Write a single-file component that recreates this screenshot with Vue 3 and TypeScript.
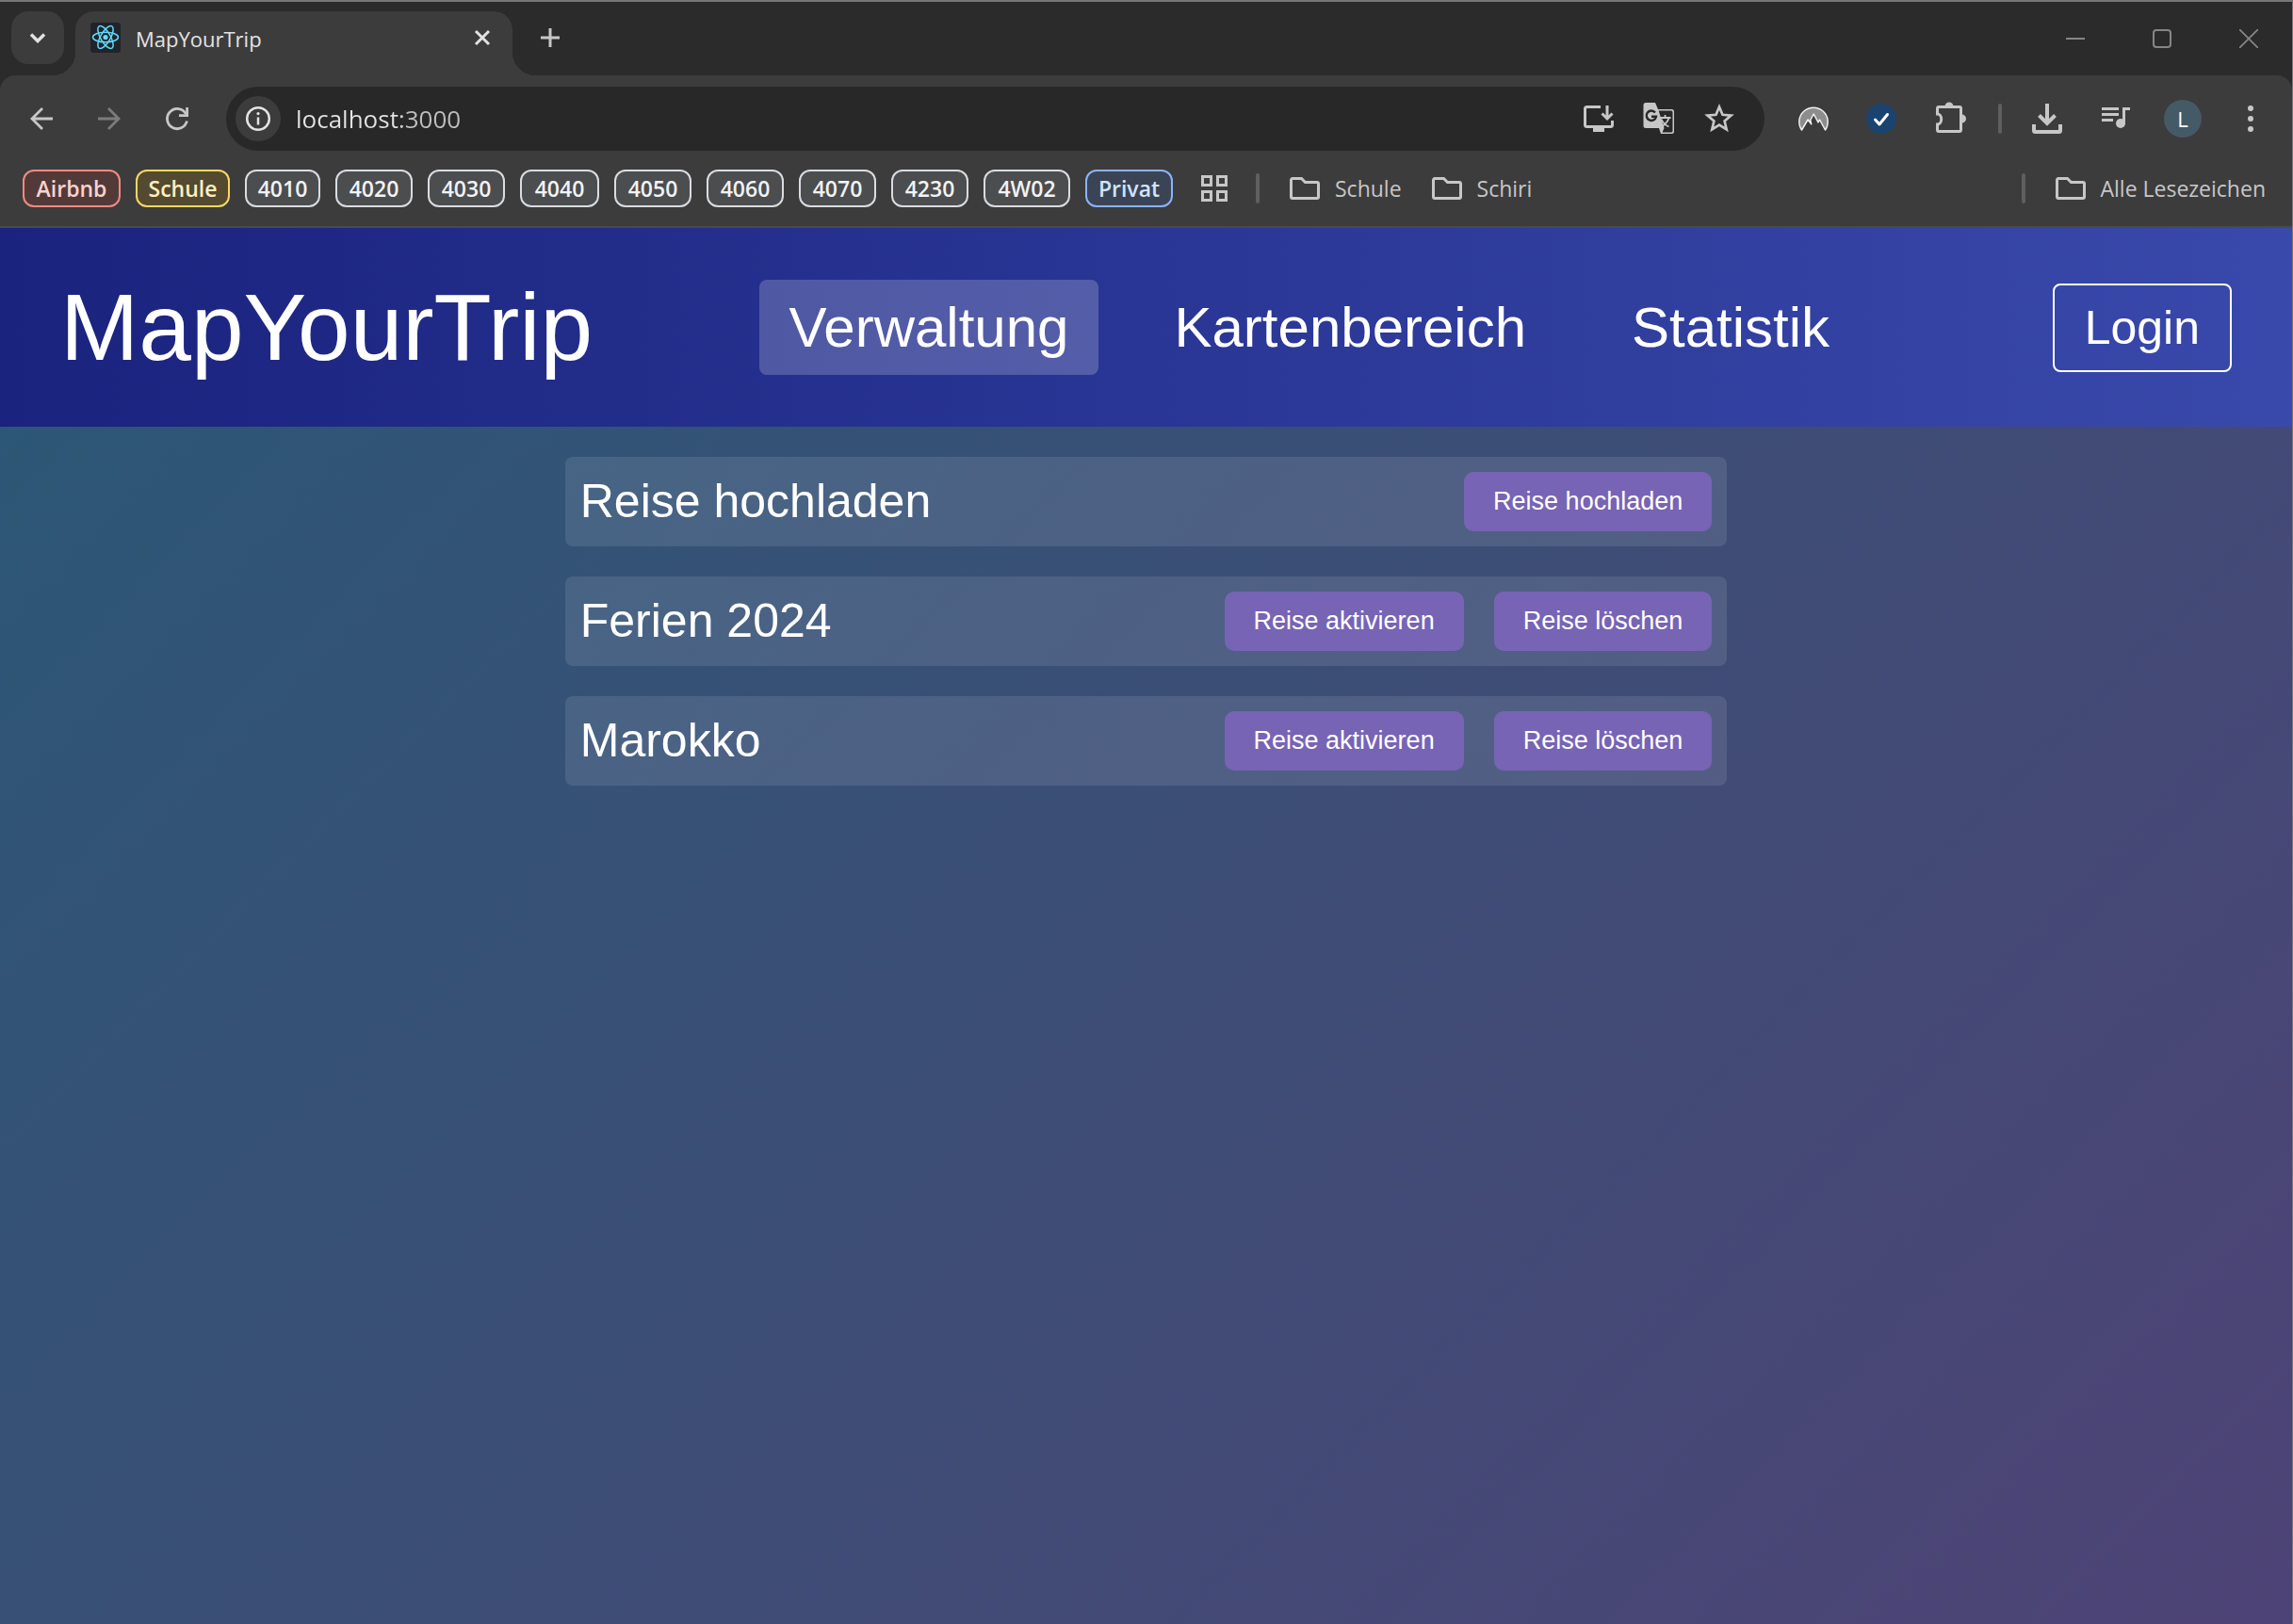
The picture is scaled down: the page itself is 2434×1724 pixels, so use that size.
<script setup lang="ts">
import { ref } from 'vue'

interface Chip {
  label: string
  tone: 'red' | 'yellow' | 'grey' | 'blue'
  width: number
}

interface TripAction {
  label: string
}

interface Trip {
  title: string
  actions: TripAction[]
}

const address = ref('localhost:3000')

const chips: Chip[] = [
  { label: 'Airbnb', tone: 'red', width: 104 },
  { label: 'Schule', tone: 'yellow', width: 100 },
  { label: '4010', tone: 'grey', width: 80 },
  { label: '4020', tone: 'grey', width: 82 },
  { label: '4030', tone: 'grey', width: 82 },
  { label: '4040', tone: 'grey', width: 84 },
  { label: '4050', tone: 'grey', width: 82 },
  { label: '4060', tone: 'grey', width: 82 },
  { label: '4070', tone: 'grey', width: 82 },
  { label: '4230', tone: 'grey', width: 82 },
  { label: '4W02', tone: 'grey', width: 92 },
  { label: 'Privat', tone: 'blue', width: 93 },
]

const folders: string[] = ['Schule', 'Schiri']

const pages: string[] = ['Verwaltung', 'Kartenbereich', 'Statistik']
const activePage = ref('Verwaltung')

const trips: Trip[] = [
  { title: 'Reise hochladen', actions: [{ label: 'Reise hochladen' }] },
  { title: 'Ferien 2024', actions: [{ label: 'Reise aktivieren' }, { label: 'Reise löschen' }] },
  { title: 'Marokko', actions: [{ label: 'Reise aktivieren' }, { label: 'Reise löschen' }] },
]
</script>

<template>
  <div class="window">
    <div class="tabstrip">
      <button class="tab-search" aria-label="Tabs durchsuchen">
        <svg width="24" height="24" viewBox="0 0 24 24" fill="none" stroke="#e3e3e3" stroke-width="3.4">
          <path d="M5 8.5l7 7 7-7" />
        </svg>
      </button>
      <div class="tab">
        <svg class="favicon" width="32" height="32" viewBox="0 0 32 32" fill="none">
          <rect width="32" height="32" rx="3" fill="#20232a" />
          <g stroke="#61dafb" stroke-width="1.5">
            <ellipse cx="16" cy="15.500" rx="13.500" ry="5.200" />
            <ellipse cx="16" cy="15.500" rx="13.500" ry="5.200" transform="rotate(60 16 15.500)" />
            <ellipse cx="16" cy="15.500" rx="13.500" ry="5.200" transform="rotate(120 16 15.500)" />
          </g>
          <circle cx="16" cy="15.500" r="2.600" fill="#61dafb" />
        </svg>
        <span class="tab-title">MapYourTrip</span>
        <button class="tab-close" aria-label="Tab schließen">
          <svg width="20" height="20" viewBox="0 0 20 20" stroke="#e3e3e3" stroke-width="3">
            <path d="M3 3l14 14M17 3L3 17" />
          </svg>
        </button>
      </div>
      <button class="tab-new" aria-label="Neuer Tab">
        <svg width="20" height="20" viewBox="0 0 20 20" stroke="#c7c7c7" stroke-width="3">
          <path d="M10 0v20M0 10h20" />
        </svg>
      </button>
      <div class="window-controls">
        <button aria-label="Minimieren">
          <svg width="20" height="20" viewBox="0 0 20 20" stroke="#868686" stroke-width="2"><path d="M0 10h20" /></svg>
        </button>
        <button aria-label="Maximieren">
          <svg width="20" height="20" viewBox="0 0 20 20" fill="none" stroke="#868686" stroke-width="2">
            <rect x="1" y="1" width="18" height="18" rx="3" />
          </svg>
        </button>
        <button aria-label="Schließen">
          <svg width="20" height="20" viewBox="0 0 20 20" stroke="#868686" stroke-width="1.8">
            <path d="M0 0l20 20M20 0L0 20" />
          </svg>
        </button>
      </div>
    </div>

    <div class="chrome">
      <div class="toolbar">
        <button class="tool" aria-label="Zurück">
          <svg width="32" height="32" viewBox="0 0 32 32" fill="none" stroke="#c7c7c7" stroke-width="2.800">
            <path d="M28 16H6M17 5L6 16l11 11" />
          </svg>
        </button>
        <button class="tool" aria-label="Vorwärts">
          <svg width="32" height="32" viewBox="0 0 32 32" fill="none" stroke="#7c7c7c" stroke-width="2.800">
            <path d="M4 16h22M15 5l11 11-11 11" />
          </svg>
        </button>
        <button class="tool" aria-label="Neu laden">
          <svg width="32" height="32" viewBox="0 0 32 32" fill="none" stroke="#c7c7c7" stroke-width="2.800">
            <path d="M26.400 18.500A10.600 10.600 0 1 1 25.500 11.200" />
            <path d="M26.600 4v8.600H18" />
          </svg>
        </button>

        <div class="omnibox">
          <button class="site-info" aria-label="Website-Informationen">
            <svg width="28" height="28" viewBox="0 0 28 28" fill="none">
              <circle cx="14" cy="14" r="11.800" stroke="#e3e3e3" stroke-width="2.500" />
              <path d="M14 12.500v8" stroke="#e3e3e3" stroke-width="2.500" />
              <circle cx="14" cy="8.600" r="1.600" fill="#e3e3e3" />
            </svg>
          </button>
          <input v-model="address" class="address" type="text" aria-label="Adresse" spellcheck="false" />
          <div class="omni-actions">
            <button class="tool" aria-label="App installieren">
              <svg width="36" height="36" viewBox="0 0 36 36" fill="none" stroke="#c7c7c7" stroke-width="3">
                <path d="M20 5.500H5.500a2 2 0 0 0-2 2v17a2 2 0 0 0 2 2h25a2 2 0 0 0 2-2V20" />
                <path d="M27 4v13M21.500 12.500l5.500 5.500 5.500-5.500" />
                <rect x="12" y="27" width="12" height="5" fill="#c7c7c7" stroke="none" />
              </svg>
            </button>
            <button class="tool" aria-label="Seite übersetzen">
              <svg width="36" height="36" viewBox="0 0 36 36" fill="none">
                <path d="M4 1h10l3 7h14.500a2.500 2.500 0 0 1 2.500 2.500v21a2.500 2.500 0 0 1-2.500 2.500H20l-2-6H4a2.500 2.500 0 0 1-2.500-2.500V3.500A2.500 2.500 0 0 1 4 1z" fill="#c7c7c7" />
                <path d="M17.600 9.500h13.400a1.500 1.500 0 0 1 1.500 1.500v20a1.500 1.500 0 0 1-1.500 1.500h-9.500l2-4.500z" fill="#282828" />
                <path d="M14 11.500a5.200 5.200 0 1 0 1 4.200h-5" stroke="#282828" stroke-width="2.400" />
                <path d="M18.500 17h12M24.500 14v3M28.500 17c-1 4-4 7-7 9M20.500 18.500c1.500 3.500 4.500 6.500 8 8" stroke="#c7c7c7" stroke-width="1.800" />
              </svg>
            </button>
            <button class="tool" aria-label="Lesezeichen hinzufügen">
              <svg width="36" height="36" viewBox="0 0 36 36" fill="none" stroke="#c7c7c7" stroke-width="2.700">
                <path d="M18 5.500l3.500 8.300 9 .8-6.900 5.900 2.100 8.800-7.700-4.700-7.700 4.700 2.100-8.800-6.900-5.900 9-.8z" />
              </svg>
            </button>
          </div>
        </div>

        <button class="tool" aria-label="VPN-Erweiterung">
          <svg width="36" height="36" viewBox="0 0 36 36">
            <path d="M5.500 30A15.200 15.200 0 1 1 30.500 30L24.500 19l-1.500 3-4.800-9-3.500 6.500 1 4.300-3.600-4.800z" fill="#8d8d8d" stroke="#f0f0f0" stroke-width="1.500" stroke-linejoin="round" />
          </svg>
        </button>
        <button class="tool" aria-label="Prüf-Erweiterung">
          <svg width="36" height="36" viewBox="0 0 36 36" fill="none">
            <circle cx="18" cy="18" r="16" fill="#1b4370" />
            <path d="M11.500 19l4.500 5 8.500-10.500" stroke="#fff" stroke-width="3" stroke-linecap="round" stroke-linejoin="round" />
          </svg>
        </button>
        <button class="tool" aria-label="Erweiterungen">
          <svg width="40" height="40" viewBox="0 0 40 40" fill="none">
            <path d="M7.500 9a1.500 1.500 0 0 1 1.500-1.500h22a1.500 1.500 0 0 1 1.500 1.500v23a1.500 1.500 0 0 1-1.500 1.500H9A1.500 1.500 0 0 1 7.500 32v-6c2.500 0 4.200-2.500 4.200-5.500S10 15 7.500 15z" stroke="#c7c7c7" stroke-width="3" />
            <path d="M15.500 7a4.500 4.500 0 0 1 9 0zM33.500 15.500a4.500 4.500 0 0 1 0 9z" fill="#c7c7c7" />
          </svg>
        </button>
        <span class="divider toolbar-divider"></span>
        <button class="tool" aria-label="Downloads">
          <svg width="36" height="36" viewBox="0 0 36 36" fill="none" stroke="#c7c7c7" stroke-width="4">
            <path d="M18 2v20" />
            <path d="M9.500 14.500l8.500 8.500 8.500-8.500" />
            <path d="M4 24v6.500a1.500 1.500 0 0 0 1.500 1.500h25a1.500 1.500 0 0 0 1.500-1.500V24" />
          </svg>
        </button>
        <button class="tool" aria-label="Mediensteuerung">
          <svg width="36" height="36" viewBox="0 0 36 36" fill="none" stroke="#c7c7c7" stroke-width="3">
            <path d="M4 7.500h18M4 13.500h18M4 19.500h12M27.500 24V7.500H34" />
            <circle cx="24" cy="23" r="5" fill="#c7c7c7" stroke="none" />
          </svg>
        </button>
        <button class="tool avatar" aria-label="Profil L">L</button>
        <button class="tool" aria-label="Menü">
          <svg width="36" height="36" viewBox="0 0 36 36" fill="#c7c7c7">
            <circle cx="18" cy="7" r="3" />
            <circle cx="18" cy="18" r="3" />
            <circle cx="18" cy="29" r="3" />
          </svg>
        </button>
      </div>

      <div class="bookmarks">
        <div class="chips">
          <button v-for="chip in chips" :key="chip.label" class="chip" :class="chip.tone" :style="{ width: `${chip.width}px` }">{{ chip.label }}</button>
        </div>
        <button class="tool apps" aria-label="Tab-Gruppen">
          <svg width="28" height="28" viewBox="0 0 28 28" fill="none" stroke="#c7c7c7" stroke-width="3">
            <rect x="1.500" y="1.500" width="9" height="9" />
            <rect x="17.500" y="1.500" width="9" height="9" />
            <rect x="1.500" y="17.500" width="9" height="9" />
            <rect x="17.500" y="17.500" width="9" height="9" />
          </svg>
        </button>
        <span class="divider"></span>
        <a v-for="folder in folders" :key="folder" class="folder" href="#">
          <svg width="32" height="24" viewBox="0 0 32 24" fill="none" stroke="#c7c7c7" stroke-width="3">
            <path d="M1.500 3a1.500 1.500 0 0 1 1.500-1.500h9.500l4 4H29a1.500 1.500 0 0 1 1.500 1.500v14a1.500 1.500 0 0 1-1.500 1.500H3A1.500 1.500 0 0 1 1.500 21z" />
          </svg>
          <span>{{ folder }}</span>
        </a>
        <span class="divider last-divider"></span>
        <a class="folder" href="#">
          <svg width="32" height="24" viewBox="0 0 32 24" fill="none" stroke="#c7c7c7" stroke-width="3">
            <path d="M1.500 3a1.500 1.500 0 0 1 1.500-1.500h9.500l4 4H29a1.500 1.500 0 0 1 1.500 1.500v14a1.500 1.500 0 0 1-1.500 1.500H3A1.500 1.500 0 0 1 1.500 21z" />
          </svg>
          <span>Alle Lesezeichen</span>
        </a>
      </div>
    </div>

    <div class="site">
      <header class="site-header">
        <div class="logo">MapYourTrip</div>
        <nav class="site-nav">
          <a v-for="page in pages" :key="page" href="#" :class="{ active: page === activePage }" @click.prevent="activePage = page">{{ page }}</a>
        </nav>
        <button class="login">Login</button>
      </header>

      <main class="content">
        <section v-for="trip in trips" :key="trip.title" class="trip">
          <h2>{{ trip.title }}</h2>
          <div class="trip-actions">
            <button v-for="action in trip.actions" :key="action.label">{{ action.label }}</button>
          </div>
        </section>
      </main>
    </div>
  </div>
</template>

<style>
body {
  margin: 0;
  background: #4e4376;
}
</style>

<style scoped>
.window {
  display: flex;
  flex-direction: column;
  box-sizing: border-box;
  min-height: 100vh;
  border-top: 2px solid #767676;
  border-right: 1px solid #77777c;
  background: #2b2b2b;
  font-family: 'Segoe UI', 'Open Sans', 'Noto Sans', sans-serif;
}

button {
  display: flex;
  align-items: center;
  justify-content: center;
  margin: 0;
  padding: 0;
  border: 0;
  background: none;
  color: inherit;
  font: inherit;
  cursor: pointer;
}

svg {
  display: block;
  flex: none;
}

.tabstrip {
  display: flex;
  height: 78px;
  padding-left: 12px;
}

.tab-search {
  width: 56px;
  height: 56px;
  margin-top: 10px;
  border-radius: 18px;
  background: #3c3c3c;
}

.tab {
  position: relative;
  display: flex;
  align-items: center;
  box-sizing: border-box;
  width: 464px;
  height: 68px;
  margin: 10px 0 0 12px;
  padding: 0 12px 12px 16px;
  border-radius: 20px 20px 0 0;
  background: #3c3c3c;
}

.tab::before,
.tab::after {
  content: '';
  position: absolute;
  bottom: 0;
  width: 24px;
  height: 24px;
}

.tab::before {
  right: 100%;
  background: radial-gradient(circle at 0 0, transparent 24px, #3c3c3c 24px);
}

.tab::after {
  left: 100%;
  background: radial-gradient(circle at 100% 0, transparent 24px, #3c3c3c 24px);
}

.tab-title {
  flex: 1;
  margin-left: 16px;
  padding-top: 2px;
  color: #e3e3e3;
  font-size: 22px;
  line-height: 32px;
}

.tab-close {
  width: 40px;
  height: 40px;
}

.tab-new {
  width: 56px;
  height: 56px;
  margin: 10px 0 0 12px;
}

.window-controls {
  display: flex;
  margin-left: auto;
}

.window-controls button {
  width: 92px;
  height: 78px;
}

.chrome {
  border-bottom: 2px solid #4a4a4a;
  border-radius: 16px 16px 0 0;
  background: #3c3c3c;
}

.toolbar {
  display: flex;
  align-items: center;
  gap: 24px;
  padding: 12px 20px 0;
}

.tool {
  flex: none;
  width: 48px;
  height: 48px;
}

.omnibox {
  display: flex;
  flex: 1;
  align-items: center;
  height: 68px;
  margin: 0 4px;
  padding: 0 24px 0 10px;
  border-radius: 34px;
  background: #282828;
}

.site-info {
  flex: none;
  width: 48px;
  height: 48px;
  border-radius: 50%;
  background: #3c3c3c;
}

.address {
  flex: 1;
  min-width: 0;
  height: 40px;
  margin: 0 16px;
  padding: 0;
  border: 0;
  outline: 0;
  background: linear-gradient(90deg, #e3e3e3 112px, #c0c0c0 112px);
  background-clip: text;
  -webkit-background-clip: text;
  color: transparent;
  font: 26px / 40px 'Segoe UI', 'Open Sans', 'Noto Sans', sans-serif;
}

.omni-actions {
  display: flex;
  gap: 16px;
}

.divider {
  flex: none;
  width: 4px;
  height: 32px;
  border-radius: 2px;
  background: #5f5f5f;
}

.toolbar-divider {
  margin-left: 4px;
}

.avatar {
  width: 40px;
  height: 40px;
  margin: 0 4px;
  border-radius: 50%;
  background: #455a67;
  color: #fff;
  font-size: 22px;
}

.bookmarks {
  display: flex;
  align-items: center;
  height: 40px;
  padding: 20px 28px 20px 24px;
}

.chips {
  display: flex;
  gap: 16px;
}

.chip {
  box-sizing: border-box;
  height: 40px;
  border: 2px solid #dadce0;
  border-radius: 12px;
  background: #4c4d4f;
  color: #f1f3f4;
  font-size: 23px;
  font-weight: 600;
}

.chip.red {
  border-color: #f28b82;
  background: #523a39;
  color: #fad2cf;
}

.chip.yellow {
  border-color: #fdd663;
  background: #544a30;
  color: #feefc3;
}

.chip.blue {
  border-color: #8ab4f8;
  background: #3b4455;
  color: #d2e3fc;
}

.apps {
  margin: 0 20px;
}

.folder {
  display: flex;
  align-items: center;
  gap: 16px;
  margin-left: 32px;
  color: #c7c7c7;
  font-size: 23px;
  line-height: 32px;
  text-decoration: none;
}

.last-divider {
  margin-left: auto;
}

.site {
  display: flex;
  flex: 1;
  flex-direction: column;
  background: linear-gradient(135deg, #2b5876, #4e4376);
  color: #fff;
  font-family: Arial, 'Liberation Sans', sans-serif;
}

.site-header {
  display: flex;
  align-items: center;
  justify-content: space-between;
  padding: 48px 64px;
  background: linear-gradient(90deg, #1a237e, #3949ab);
}

.logo {
  font-size: 100px;
  line-height: 115px;
}

.site-nav {
  display: flex;
  gap: 48px;
  margin-right: 28px;
}

.site-nav a {
  padding: 16px 32px;
  border-radius: 8px;
  color: #fff;
  font-size: 60px;
  line-height: 69px;
  text-decoration: none;
}

.site-nav a.active {
  background: rgba(255, 255, 255, 0.2);
}

.login {
  padding: 16px 32px;
  border: 2px solid #fff;
  border-radius: 8px;
  font-size: 50px;
  line-height: 58px;
}

.content {
  display: flex;
  flex-direction: column;
  align-items: center;
  gap: 32px;
  padding: 32px 0;
}

.trip {
  display: flex;
  align-items: center;
  justify-content: space-between;
  box-sizing: border-box;
  width: calc(50% + 17px);
  padding: 16px;
  border-radius: 8px;
  background: rgba(255, 255, 255, 0.1);
}

.trip h2 {
  margin: 0;
  font-size: 50px;
  font-weight: 400;
  line-height: 63px;
}

.trip-actions {
  display: flex;
  gap: 32px;
}

.trip-actions button {
  padding: 16px 31px;
  border-radius: 10px;
  background: #7764b5;
  font-size: 27px;
  line-height: 31px;
}
</style>
